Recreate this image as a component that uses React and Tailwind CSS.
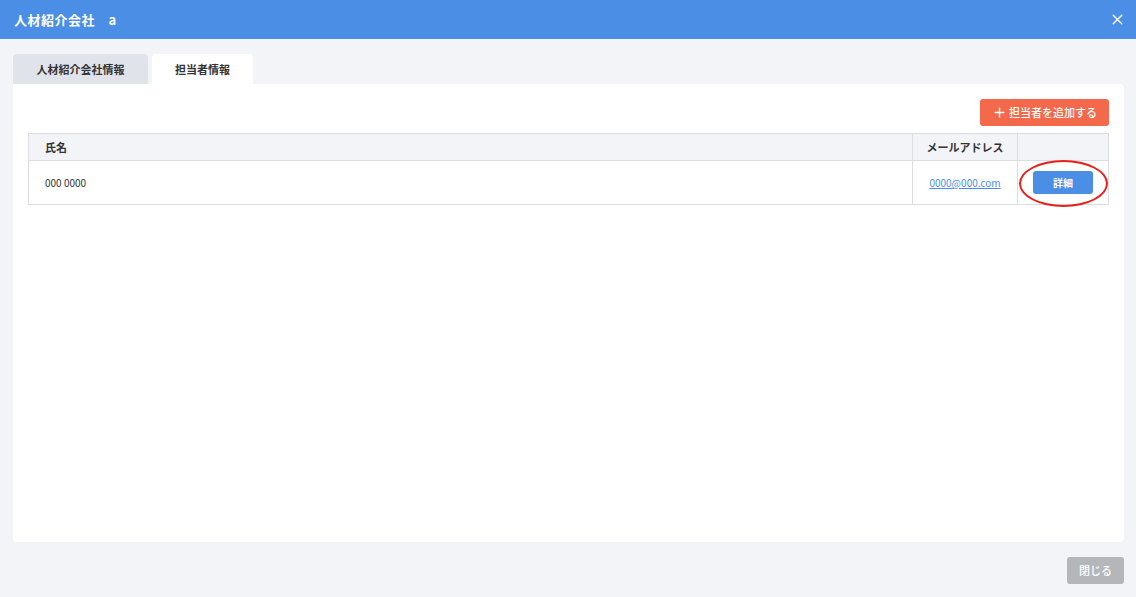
import { X, Plus } from "lucide-react";

export default function App() {
  return (
    <div
      className="w-[1136px] h-[597px] bg-[#f3f4f8] flex flex-col"
      style={{ fontFamily: '"Noto Sans CJK JP", "Noto Sans", sans-serif' }}
    >
      {/* header */}
      <div className="h-[39px] bg-[#4a8ee5] flex items-center justify-between pl-[14px] pr-[10px]">
        <div className="text-white text-[13px] font-bold tracking-[0.5px]">人材紹介会社　a</div>
        <X className="w-[17px] h-[17px] text-white" strokeWidth={2} />
      </div>

      <div className="flex-1 flex flex-col pl-[13px] pr-[12px] pt-[15px]">
        {/* tabs */}
        <div className="flex gap-[4px]">
          <div className="w-[135px] h-[30px] bg-[#e0e3ea] rounded-t-[4px] flex items-center justify-center text-[11px] font-bold text-[#333]">
            人材紹介会社情報
          </div>
          <div className="w-[101px] h-[30px] bg-white rounded-t-[4px] flex items-center justify-center text-[11px] font-bold text-[#333]">
            担当者情報
          </div>
        </div>

        {/* panel */}
        <div className="h-[458px] bg-white rounded-b-[4px] rounded-tr-[4px] px-[15px] pt-[15px]">
          <div className="flex justify-end">
            <button className="h-[27px] w-[129px] bg-[#f4694b] rounded-[3px] flex items-center justify-center gap-[2px] text-white text-[11px] font-medium">
              <Plus className="w-[15px] h-[15px]" strokeWidth={2.2} />
              担当者を追加する
            </button>
          </div>
          <table className="mt-[7px] w-full border-collapse text-[11px] text-[#333]">
            <thead>
              <tr className="h-[27px] bg-[#f3f4f8]">
                <th className="border border-[#dcdde0] text-left font-bold pl-[16px]">氏名</th>
                <th className="border border-[#dcdde0] font-bold w-[105px]">メールアドレス</th>
                <th className="border border-[#dcdde0] w-[91px]"></th>
              </tr>
            </thead>
            <tbody>
              <tr className="h-[44px]">
                <td className="border border-[#dcdde0] pl-[16px] text-[10px]">000 0000</td>
                <td className="border border-[#dcdde0] text-center text-[10px]">
                  <span className="text-[#4a8ee5] underline">0000@000.com</span>
                </td>
                <td className="border border-[#dcdde0] relative">
                  <div className="flex justify-center">
                    <button className="w-[60px] h-[23px] bg-[#4a8ee5] rounded-[3px] text-white text-[10px] font-bold">
                      詳細
                    </button>
                  </div>
                  <div className="absolute left-[1px] top-[-1px] w-[89px] h-[47px] rounded-[50%] border-[2.5px] border-[#e8201a]"></div>
                </td>
              </tr>
            </tbody>
          </table>
        </div>

        <div className="flex justify-end pt-[15px]">
          <button className="w-[57px] h-[27px] bg-[#b4b6ba] rounded-[3px] text-white text-[11px] font-medium">
            閉じる
          </button>
        </div>
      </div>
    </div>
  );
}
